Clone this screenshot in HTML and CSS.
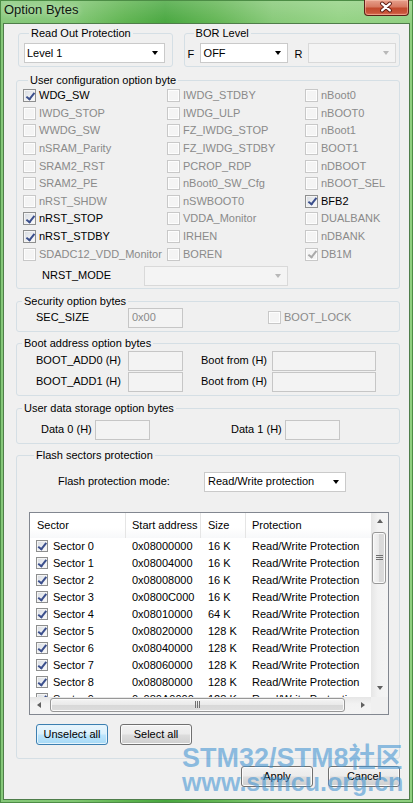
FILE: index.html
```html
<!DOCTYPE html>
<html lang="en">
<head>
<meta charset="utf-8">
<title>Option Bytes</title>
<link rel="stylesheet" href="styles.css">
</head>
<body>
<div class="window">
  <header class="titlebar">
    <span class="title">Option Bytes</span>
    <div class="close">
      <svg width="45" height="16" viewBox="0 0 45 16">
        <path d="M18.5 4.5 L26.5 11.5 M26.5 4.5 L18.5 11.5" stroke="#5a1a10" stroke-width="4.2" stroke-linecap="round"/>
        <path d="M18.5 4.5 L26.5 11.5 M26.5 4.5 L18.5 11.5" stroke="#fff" stroke-width="2.2" stroke-linecap="round"/>
      </svg>
    </div>
  </header>

  <main class="client">
    <div class="toprow">
      <fieldset class="grp rop">
        <legend>Read Out Protection</legend>
        <div class="combo rop-combo"><span class="val">Level 1</span><i class="arrow"></i></div>
      </fieldset>
      <fieldset class="grp bor">
        <legend>BOR Level</legend>
        <div class="bor-row">
          <span class="flabel">F</span>
          <div class="combo bor-combo"><span class="val">OFF</span><i class="arrow"></i></div>
          <span class="rlabel">R</span>
          <div class="combo bor-combo off"><i class="arrow"></i></div>
        </div>
      </fieldset>
    </div>

    <fieldset class="grp user">
      <legend>User configuration option byte</legend>
      <div class="cbgrid">
        <label class="cb"><span class="box chk"></span>WDG_SW</label>
        <label class="cb dis"><span class="box"></span>IWDG_STDBY</label>
        <label class="cb dis"><span class="box"></span>nBoot0</label>

        <label class="cb dis"><span class="box"></span>IWDG_STOP</label>
        <label class="cb dis"><span class="box"></span>IWDG_ULP</label>
        <label class="cb dis"><span class="box"></span>nBOOT0</label>

        <label class="cb dis"><span class="box"></span>WWDG_SW</label>
        <label class="cb dis"><span class="box"></span>FZ_IWDG_STOP</label>
        <label class="cb dis"><span class="box"></span>nBoot1</label>

        <label class="cb dis"><span class="box"></span>nSRAM_Parity</label>
        <label class="cb dis"><span class="box"></span>FZ_IWDG_STDBY</label>
        <label class="cb dis"><span class="box"></span>BOOT1</label>

        <label class="cb dis"><span class="box"></span>SRAM2_RST</label>
        <label class="cb dis"><span class="box"></span>PCROP_RDP</label>
        <label class="cb dis"><span class="box"></span>nDBOOT</label>

        <label class="cb dis"><span class="box"></span>SRAM2_PE</label>
        <label class="cb dis"><span class="box"></span>nBoot0_SW_Cfg</label>
        <label class="cb dis"><span class="box"></span>nBOOT_SEL</label>

        <label class="cb dis"><span class="box"></span>nRST_SHDW</label>
        <label class="cb dis"><span class="box"></span>nSWBOOT0</label>
        <label class="cb"><span class="box chk"></span>BFB2</label>

        <label class="cb"><span class="box chk"></span>nRST_STOP</label>
        <label class="cb dis"><span class="box"></span>VDDA_Monitor</label>
        <label class="cb dis"><span class="box"></span>DUALBANK</label>

        <label class="cb"><span class="box chk"></span>nRST_STDBY</label>
        <label class="cb dis"><span class="box"></span>IRHEN</label>
        <label class="cb dis"><span class="box"></span>nDBANK</label>

        <label class="cb dis"><span class="box"></span>SDADC12_VDD_Monitor</label>
        <label class="cb dis"><span class="box"></span>BOREN</label>
        <label class="cb dis"><span class="box chk"></span>DB1M</label>
      </div>
      <div class="nrst-row">
        <span class="nrst-label">NRST_MODE</span>
        <div class="combo off nrst-combo"><i class="arrow"></i></div>
      </div>
    </fieldset>

    <fieldset class="grp sec">
      <legend>Security option bytes</legend>
      <div class="frow">
        <span class="flbl lbl-a">SEC_SIZE</span>
        <div class="edit e55">0x00</div>
        <label class="cb dis bootlock"><span class="box"></span>BOOT_LOCK</label>
      </div>
    </fieldset>

    <fieldset class="grp boot">
      <legend>Boot address option bytes</legend>
      <div class="frow">
        <span class="flbl lbl-a">BOOT_ADD0 (H)</span>
        <div class="edit e55"></div>
        <span class="flbl lbl-b">Boot from (H)</span>
        <div class="edit e104"></div>
      </div>
      <div class="frow gap1">
        <span class="flbl lbl-a">BOOT_ADD1 (H)</span>
        <div class="edit e55"></div>
        <span class="flbl lbl-b">Boot from (H)</span>
        <div class="edit e104"></div>
      </div>
    </fieldset>

    <fieldset class="grp udata">
      <legend>User data storage option bytes</legend>
      <div class="frow">
        <span class="flbl lbl-d0">Data 0 (H)</span>
        <div class="edit e55"></div>
        <span class="flbl lbl-d1">Data 1 (H)</span>
        <div class="edit e55"></div>
      </div>
    </fieldset>

    <fieldset class="grp flash">
      <legend>Flash sectors protection</legend>
      <div class="frow">
        <span class="flbl lbl-fp">Flash protection mode:</span>
        <div class="combo fp-combo"><span class="val">Read/Write protection</span><i class="arrow"></i></div>
      </div>

      <div class="list">
        <div class="lv">
          <div class="lv-head"><span>Sector</span><span>Start address</span><span>Size</span><span>Protection</span></div>
          <div class="lv-row"><span class="c1"><i class="box chk"></i>Sector 0</span><span>0x08000000</span><span>16 K</span><span>Read/Write Protection</span></div>
          <div class="lv-row"><span class="c1"><i class="box chk"></i>Sector 1</span><span>0x08004000</span><span>16 K</span><span>Read/Write Protection</span></div>
          <div class="lv-row"><span class="c1"><i class="box chk"></i>Sector 2</span><span>0x08008000</span><span>16 K</span><span>Read/Write Protection</span></div>
          <div class="lv-row"><span class="c1"><i class="box chk"></i>Sector 3</span><span>0x0800C000</span><span>16 K</span><span>Read/Write Protection</span></div>
          <div class="lv-row"><span class="c1"><i class="box chk"></i>Sector 4</span><span>0x08010000</span><span>64 K</span><span>Read/Write Protection</span></div>
          <div class="lv-row"><span class="c1"><i class="box chk"></i>Sector 5</span><span>0x08020000</span><span>128 K</span><span>Read/Write Protection</span></div>
          <div class="lv-row"><span class="c1"><i class="box chk"></i>Sector 6</span><span>0x08040000</span><span>128 K</span><span>Read/Write Protection</span></div>
          <div class="lv-row"><span class="c1"><i class="box chk"></i>Sector 7</span><span>0x08060000</span><span>128 K</span><span>Read/Write Protection</span></div>
          <div class="lv-row"><span class="c1"><i class="box chk"></i>Sector 8</span><span>0x08080000</span><span>128 K</span><span>Read/Write Protection</span></div>
          <div class="lv-row"><span class="c1"><i class="box chk"></i>Sector 9</span><span>0x080A0000</span><span>128 K</span><span>Read/Write Protection</span></div>
        </div>
        <div class="vscroll">
          <span class="sbtn"><i class="tri up"></i></span>
          <div class="vthumb"><i class="grip-h"></i></div>
          <span class="sbtn end"><i class="tri down"></i></span>
        </div>
        <div class="hscroll">
          <span class="sbtn"><i class="tri left"></i></span>
          <div class="hthumb"><i class="grip-v"></i></div>
          <span class="sbtn end"><i class="tri right"></i></span>
        </div>
        <div class="corner"></div>
      </div>

      <div class="btnrow">
        <button class="btn focus">Unselect all</button>
        <button class="btn">Select all</button>
      </div>
    </fieldset>

    <div class="dlgbtns">
      <button class="btn">Apply</button>
      <button class="btn">Cancel</button>
    </div>
  </main>

  <div class="watermark">
    <div class="wm1">STM32/STM8社区</div>
    <div class="wm2">www.stmcu.org.cn</div>
  </div>
</div>
</body>
</html>
```

FILE: styles.css
```css
* { box-sizing: border-box; }

html, body {
  margin: 0;
  padding: 0;
}

body {
  width: 413px;
  height: 803px;
  overflow: hidden;
  font-family: "Liberation Sans", Arial, sans-serif;
  font-size: 11px;
  line-height: 13px;
  color: #000;
  background: #7cc66c;
}

.window {
  position: relative;
  width: 413px;
  height: 803px;
  display: flex;
  flex-direction: column;
  padding: 0 3px 3px;
  background:
    linear-gradient(180deg, rgba(255,255,255,0.18), rgba(255,255,255,0) 24px),
    linear-gradient(90deg, #86c87a 0%, #80c672 18%, #5fb450 30%, #48a73f 40%, #62b553 52%, #86c977 66%, #93d283 82%, #8fcf80 100%);
  box-shadow: inset 0 0 0 1px #4c8d45;
}

/* ---------- title bar ---------- */
.titlebar {
  height: 23px;
  flex: none;
  display: flex;
  align-items: flex-start;
  margin: 0 -3px;
  padding-left: 4px;
}

.title {
  padding-top: 2px;
  font-size: 13px;
  line-height: 15px;
  color: #101810;
  text-shadow: 0 0 6px rgba(255,255,255,0.7);
}

.close {
  margin-left: auto;
  margin-right: 4px;
  width: 45px;
  height: 16px;
  border: 1px solid #5b2016;
  border-top: none;
  border-radius: 0 0 4px 4px;
  background: linear-gradient(180deg, #e6a08c 0%, #d77a62 45%, #c24a2d 55%, #c9553a 85%, #e07b5e 100%);
  box-shadow: inset 0 0 0 1px rgba(255,210,190,0.45);
  display: flex;
  align-items: center;
  justify-content: center;
}

.close svg { display: block; margin: -1px 0 0 -1px; }

/* ---------- client ---------- */
.client {
  flex: 1;
  background: #f0f0f0;
  border: 1px solid #4f7d4a;
  padding: 0 9px 0 12px;
  display: flex;
  flex-direction: column;
}

.grp {
  margin: 0;
  padding: 0;
  min-width: 0;
  border: 1px solid #d5dfe5;
  border-radius: 3px;
}

.grp legend {
  margin-left: 5px;
  padding: 0 2px;
  font-size: 11px;
  line-height: 13px;
  color: #000;
}

.toprow {
  display: flex;
  margin-top: 3px;
}

.rop {
  width: 155px;
  margin-left: 2px;
  padding: 3px 5px;
}

.bor {
  width: 217px;
  margin-left: 11px;
  padding: 3px 3px;
}

.bor legend { margin-left: 6px; }

.bor-row {
  display: flex;
  align-items: center;
}

.flabel { width: 12px; padding-top: 2px; }
.rlabel { width: 13px; margin-left: 7px; padding-top: 2px; }

/* combo boxes */
.combo {
  height: 20px;
  background: #fff;
  border: 1px solid #cacaca;
  display: flex;
  align-items: center;
  padding-left: 2px;
}

.combo .val { flex: 1; white-space: nowrap; }

.combo .arrow {
  margin-left: auto;
  margin-right: 6px;
  width: 0;
  height: 0;
  border-left: 3.5px solid transparent;
  border-right: 3.5px solid transparent;
  border-top: 4px solid #000;
}

.combo.off {
  background: #f4f4f4;
  border-color: #d9d9d9;
}

.combo.off .arrow { border-top-color: #b8b8b8; }

.rop-combo { width: 141px; }
.bor-combo { width: 88px; padding-left: 3px; }
.nrst-combo { width: 144px; }
.fp-combo { width: 142px; padding-left: 3px; }

/* ---------- user config ---------- */
.user {
  margin-top: 7px;
  padding: 0 0 2px 6px;
}

.cbgrid {
  display: grid;
  grid-template-columns: 144px 138px 1fr;
  grid-auto-rows: 17.6px;
}

.cb {
  display: flex;
  align-items: center;
  gap: 3px;
  white-space: nowrap;
}

.cb.dis { color: #8a8a8a; }

.box {
  position: relative;
  width: 13px;
  height: 13px;
  flex: none;
  display: block;
  border: 1px solid #8e8f8f;
  background: linear-gradient(135deg, #d6dae0 0%, #eef0f3 60%, #fbfbfb 100%);
  box-shadow: inset 0 0 0 1px #f4f4f4;
}

.dis .box {
  border-color: #c8c8c8;
  background: #f4f4f4;
  box-shadow: inset 0 0 0 1px #fdfdfd;
}

.box.chk::after {
  content: "";
  position: absolute;
  left: 3.5px;
  top: 0.5px;
  width: 3px;
  height: 7px;
  border: solid #3b4f8c;
  border-width: 0 2px 2px 0;
  transform: rotate(38deg);
}

.dis .box.chk::after { border-color: #a9a9a9; }

.nrst-row {
  display: flex;
  align-items: center;
  margin-top: 3px;
}

.nrst-label {
  width: 102px;
  margin-left: 19px;
}

/* ---------- form rows ---------- */
.frow {
  display: flex;
  align-items: center;
}

.frow.gap1 { margin-top: 1px; }

.flbl { white-space: nowrap; flex: none; }

.lbl-a { width: 92px; margin-left: 19px; }
.lbl-b { width: 71px; margin-left: 18px; }
.lbl-d0 { width: 54px; margin-left: 24px; }
.lbl-d1 { width: 54px; margin-left: 81px; }
.lbl-fp { width: 146px; margin-left: 29px; }

.edit {
  height: 20px;
  flex: none;
  background: #f3f3f3;
  border: 1px solid #c6c6c6;
  color: #8a8a8a;
  padding: 2px 0 0 3px;
}

.e55 { width: 55px; }
.e104 { width: 104px; }

.bootlock { margin-left: 85px; }

.sec {
  margin-top: 6px;
  padding: 0 0 3px 0;
}

.boot {
  margin-top: 5px;
  padding: 1px 0 3px 0;
}

.udata {
  margin-top: 6px;
  padding: 5px 0 3px 0;
}

.flash {
  margin-top: 5px;
  padding: 10px 0 13px 12px;
}

/* ---------- list view ---------- */
.list {
  margin-top: 20px;
  width: 360px;
  height: 203px;
  border: 1px solid #828790;
  background: #fff;
  display: grid;
  grid-template-columns: 341px 17px;
  grid-template-rows: 184px 17px;
}

.lv {
  overflow: hidden;
}

.lv-head,
.lv-row {
  display: grid;
  grid-template-columns: 96px 75px 45px 125px;
}

.lv-head {
  height: 25px;
  background: linear-gradient(180deg, #ffffff 0%, #ffffff 60%, #f7f8fa 100%);
}

.lv-head span {
  display: flex;
  align-items: center;
  padding-left: 6px;
  border-right: 1px solid #e5e5e5;
  white-space: nowrap;
}

.lv-head span:first-child { padding-left: 7px; }
.lv-head span:nth-child(3) { padding-left: 7px; }
.lv-head span:last-child { border-right: none; }

.lv-row {
  height: 17px;
  align-items: center;
}

.lv-row span {
  white-space: nowrap;
  padding-left: 6px;
  overflow: hidden;
}

.lv-row span:nth-child(3) { padding-left: 7px; }

.lv-row .c1 {
  display: flex;
  align-items: center;
  gap: 5px;
}

.lv-row .box {
  width: 12px;
  height: 12px;
}

.lv-row .box.chk::after {
  left: 3px;
  top: 0;
  height: 6.5px;
}

/* scrollbars */
.vscroll {
  display: flex;
  flex-direction: column;
  background: linear-gradient(90deg, #e6e6e6 0%, #f2f2f2 40%, #f4f4f4 100%);
}

.hscroll {
  display: flex;
  background: linear-gradient(180deg, #e6e6e6 0%, #f2f2f2 40%, #f4f4f4 100%);
}

.corner { background: #f0f0f0; }

.sbtn {
  width: 17px;
  height: 17px;
  flex: none;
  display: flex;
  align-items: center;
  justify-content: center;
}

.sbtn.end { margin-top: auto; }
.hscroll .sbtn.end { margin-top: 0; margin-left: auto; }

.tri { width: 0; height: 0; display: block; }
.tri.up { border-left: 3.5px solid transparent; border-right: 3.5px solid transparent; border-bottom: 4px solid #606060; }
.tri.down { border-left: 3.5px solid transparent; border-right: 3.5px solid transparent; border-top: 4px solid #606060; }
.tri.left { border-top: 3.5px solid transparent; border-bottom: 3.5px solid transparent; border-right: 4px solid #606060; }
.tri.right { border-top: 3.5px solid transparent; border-bottom: 3.5px solid transparent; border-left: 4px solid #606060; }

.vthumb {
  margin: 2px 2px 0 1px;
  height: 52px;
  border: 1px solid #979797;
  border-radius: 3px;
  background: linear-gradient(90deg, #f4f4f4 0%, #e9e9e9 50%, #d8d8d8 51%, #dcdcdc 100%);
  box-shadow: inset 0 0 0 1px #fafafa;
  display: flex;
  align-items: center;
  justify-content: center;
}

.grip-h {
  display: block;
  width: 7px;
  height: 5px;
  background: repeating-linear-gradient(180deg, #707070 0 1px, transparent 1px 2px);
}

.hthumb {
  margin: 1px 0 2px 3px;
  width: 295px;
  border: 1px solid #979797;
  border-radius: 3px;
  background: linear-gradient(180deg, #f4f4f4 0%, #e9e9e9 50%, #d8d8d8 51%, #dcdcdc 100%);
  box-shadow: inset 0 0 0 1px #fafafa;
  display: flex;
  align-items: center;
  justify-content: center;
}

.grip-v {
  display: block;
  width: 5px;
  height: 7px;
  background: repeating-linear-gradient(90deg, #707070 0 1px, transparent 1px 2px);
}

/* ---------- buttons ---------- */
.btnrow {
  display: flex;
  gap: 12px;
  margin-top: 9px;
  padding-left: 7px;
}

.btn {
  width: 72px;
  height: 21px;
  margin: 0;
  padding: 0;
  font-family: "Liberation Sans", Arial, sans-serif;
  font-size: 11px;
  line-height: 13px;
  color: #000;
  border: 1px solid #707070;
  border-radius: 3px;
  background: linear-gradient(180deg, #f2f2f2 0%, #ebebeb 48%, #dddddd 52%, #cfcfcf 100%);
  box-shadow: inset 0 0 0 1px #fbfbfb;
}

.btn.focus {
  border-color: #3c7fb1;
  background: linear-gradient(180deg, #eaf6fd 0%, #d9f0fc 48%, #bee6fd 52%, #a7d9f5 100%);
  box-shadow: inset 0 0 0 1px #e5f4fc;
}

.dlgbtns {
  display: flex;
  justify-content: flex-end;
  gap: 15px;
  margin-top: 7px;
}

/* ---------- watermark ---------- */
.watermark {
  position: absolute;
  left: 182px;
  top: 744px;
  font-family: "Liberation Sans", Arial, "Noto Sans CJK SC", sans-serif;
  font-weight: bold;
  color: rgba(70, 150, 210, 0.6);
  pointer-events: none;
  white-space: nowrap;
}

.wm1 {
  font-size: 27px;
  line-height: 28px;
}

.wm2 {
  font-size: 25px;
  line-height: 20px;
}
```
